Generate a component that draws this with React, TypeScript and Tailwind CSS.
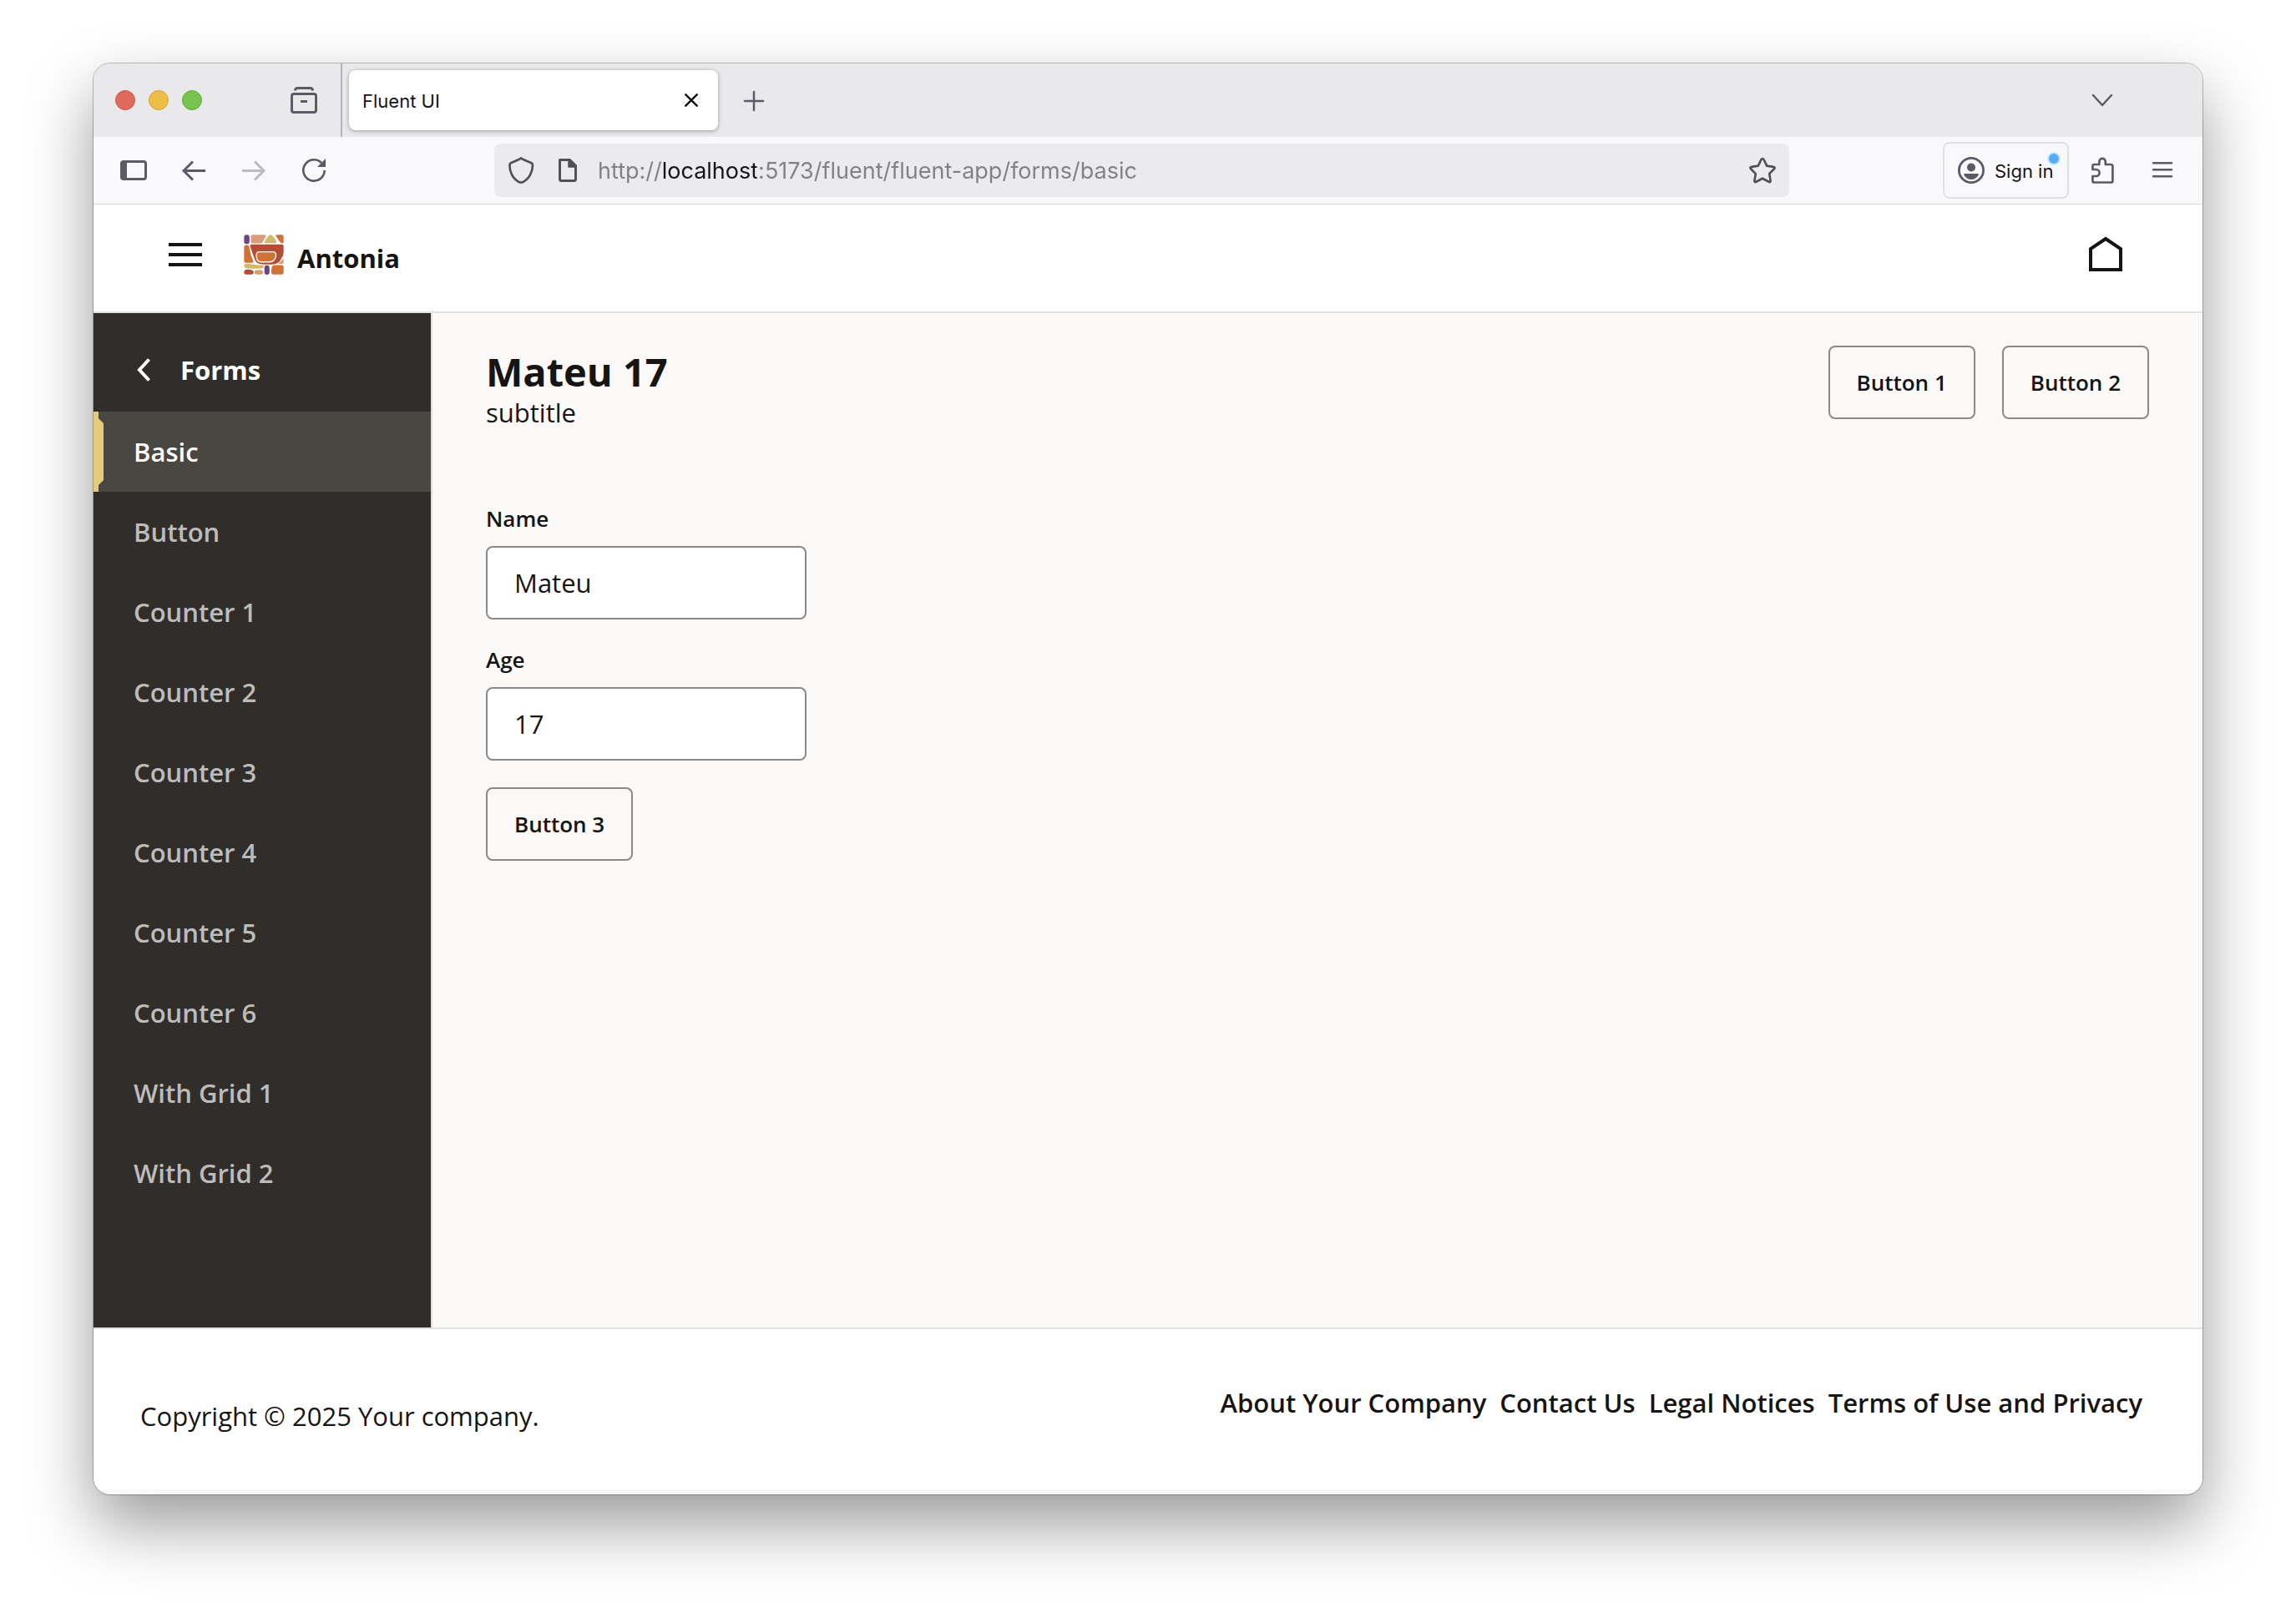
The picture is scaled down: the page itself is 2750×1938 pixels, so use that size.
import type { ReactNode } from "react";

const menuItems = [
  "Basic",
  "Button",
  "Counter 1",
  "Counter 2",
  "Counter 3",
  "Counter 4",
  "Counter 5",
  "Counter 6",
  "With Grid 1",
  "With Grid 2",
];

const footerLinks = ["About Your Company", "Contact Us", "Legal Notices", "Terms of Use and Privacy"];

function IconButton({ label, className = "", children }: { label: string; className?: string; children: ReactNode }) {
  return (
    <button type="button" aria-label={label} className={`flex size-8 shrink-0 items-center justify-center ${className}`}>
      {children}
    </button>
  );
}

function OutlinedButton({ children }: { children: ReactNode }) {
  return (
    <button
      type="button"
      className="h-[88px] rounded-lg border-2 border-[#8b8a88] px-8 text-[26px] leading-8 font-semibold whitespace-nowrap"
    >
      {children}
    </button>
  );
}

function Field({ id, label, value }: { id: string; label: string; value: string }) {
  return (
    <div className="flex flex-col">
      <label htmlFor={id} className="text-[26px] leading-[33px] font-semibold">
        {label}
      </label>
      <input
        id={id}
        defaultValue={value}
        className="mt-4 h-[88px] w-96 rounded-lg border-2 border-[#8b8a88] bg-white px-8 text-[31px]"
      />
    </div>
  );
}

function Logo() {
  return (
    <svg viewBox="68 48 142 142" className="size-12 shrink-0" aria-hidden="true">
      <rect x="69" y="49" width="19" height="32" rx="8" fill="#6b4581" />
      <path d="M99 49h41q9 0 5 7l-10 18q-3 5-8 5H99q-6 0-6-6V55q0-6 6-6z" fill="#dc9a76" />
      <path d="M157 51q6-4 12 0 10 10 15 23 1 4-4 4h-36q-5 0-3-4 6-13 16-23z" fill="#d2b96c" />
      <path d="M184 49h19q6 0 6 6v19q0 5-5 5-5 0-8-5l-14-20q-2-5 2-5z" fill="#cf7335" />
      <path d="M75 85h6q5 0 6 5l6 30 9 23q1 5-4 5H75q-6 0-6-6V93q0-8 6-8z" fill="#cf7335" />
      <path
        d="M95 83h108q6 0 6 6v21q0 14-8 22-6 16-22 20-26 3-52 0-14-2-19-14-9-21-17-48-2-7 4-7z"
        fill="#b34d35"
      />
      <path
        d="M122 109h50q10 0 10 12 0 11-8 19-5 5-14 5h-30q-13 0-16-12-2-10-1-16 2-8 9-8z"
        fill="#cf7335"
        stroke="#fff"
        strokeWidth="4"
      />
      <path d="M205 135q4-2 4 3v10q0 4-5 4h-11q-4-1-1-4 9-5 13-13z" fill="#dc9a76" />
      <path d="M74 151q14 0 28 3 17 3 33 2 5 1 4 6-1 6-7 6-30 2-57-1-6-1-6-8t5-8z" fill="#d2b96c" />
      <path d="M75 172q10-2 20 1 8 2 8 9 0 7-7 7H76q-7 0-7-8t6-9z" fill="#b34d35" />
      <path d="M112 174q10-2 19 0 5 1 5 7 0 8-7 8h-15q-8 0-8-8 0-6 6-7z" fill="#dc9a76" />
      <rect x="141" y="157" width="18" height="33" rx="9" fill="#6b4581" />
      <path d="M175 156h27q7 0 7 7v19q0 7-7 7h-30q-7 0-7-7 0-7 2-17 2-9 8-9z" fill="#cf7335" />
    </svg>
  );
}

function TabStrip() {
  return (
    <div className="flex h-[88px] items-center bg-[#e9e9eb]">
      <div className="ml-[26px] flex gap-4">
        <button type="button" aria-label="Close window" className="size-6 rounded-full border border-[#cf5648] bg-[#de695c]" />
        <button type="button" aria-label="Minimise window" className="size-6 rounded-full border border-[#d7a335] bg-[#edbd45]" />
        <button type="button" aria-label="Zoom window" className="size-6 rounded-full border border-[#62ae3a] bg-[#78c34e]" />
      </div>
      <IconButton label="Recent browsing" className="ml-[106px]">
        <svg viewBox="0 0 32 32" className="size-8" fill="none" stroke="#5b5b66" strokeWidth="3">
          <path d="M5.500 4.500q0-3 3-3h15q3 0 3 3" />
          <rect x="1.500" y="8.500" width="29" height="22" rx="2.500" />
          <path d="M12 17.500h8" />
        </svg>
      </IconButton>
      <div className="ml-7 h-full w-0.5 bg-[#b4b4b8]" />
      <div className="ml-2 flex h-[72px] w-[442px] items-center justify-between rounded-lg bg-white pr-6 pl-4 shadow-[0_1px_5px_rgba(0,0,0,0.35)]">
        <span className="pt-0.5 text-[22px] leading-8 text-[#15141a]">Fluent UI</span>
        <button type="button" aria-label="Close tab">
          <svg viewBox="0 0 16 16" className="size-4" fill="none" stroke="#15141a" strokeWidth="2.500" strokeLinecap="round">
            <path d="M1.300 1.300l13.400 13.400M14.700 1.300L1.300 14.700" />
          </svg>
        </button>
      </div>
      <IconButton label="New tab" className="ml-[27px]">
        <svg viewBox="0 0 32 32" className="size-8" fill="none" stroke="#5b5b66" strokeWidth="2.500" strokeLinecap="round">
          <path d="M16 6v22M5 17h22" />
        </svg>
      </IconButton>
      <IconButton label="List all tabs" className="mr-[104px] ml-auto">
        <svg viewBox="0 0 32 32" className="size-8" fill="none" stroke="#5b5b66" strokeWidth="2.500" strokeLinecap="round" strokeLinejoin="round">
          <path d="M5 10l11 12 11-12" />
        </svg>
      </IconButton>
    </div>
  );
}

function NavigationBar() {
  return (
    <div className="flex h-[81px] items-center border-b border-[#d8d8dc] bg-[#f9f9fb]">
      <div className="ml-8 flex gap-10">
        <IconButton label="Show sidebar">
          <svg viewBox="0 0 32 32" className="size-8" fill="none" stroke="#5b5b66" strokeWidth="3">
            <rect x="1.500" y="5.500" width="29" height="21" rx="2.500" />
            <path d="M2 6h6v20H2z" fill="#5b5b66" stroke="none" />
          </svg>
        </IconButton>
        <IconButton label="Back">
          <svg viewBox="0 0 32 32" className="size-8" fill="none" stroke="#5b5b66" strokeWidth="3">
            <path d="M30 16.500H4M15 5.500l-11 11 11 11" />
          </svg>
        </IconButton>
        <IconButton label="Forward">
          <svg viewBox="0 0 32 32" className="size-8" fill="none" stroke="#bababf" strokeWidth="3">
            <path d="M2 16.500h26M17 5.500l11 11-11 11" />
          </svg>
        </IconButton>
        <IconButton label="Reload">
          <svg viewBox="0 0 32 32" className="size-8" fill="none" stroke="#5b5b66" strokeWidth="2.700">
            <path d="M28.700 16a12.700 12.700 0 1 1-3.700-9" />
            <path d="M30 2v10H20z" fill="#5b5b66" stroke="none" />
          </svg>
        </IconButton>
      </div>
      <div className="ml-50 flex h-16 min-w-0 flex-1 items-center rounded-lg bg-[#ebebed] px-4">
        <IconButton label="Tracking protection">
          <svg viewBox="0 0 32 32" className="size-8" fill="none" stroke="#515155" strokeWidth="2.700" strokeLinejoin="round">
            <path d="M16 1.500l2 1.200 10.500 4.500q1.500.8 1.500 2.500c0 8-4 16.500-11.500 20.300q-2.500 1-5 0C6 26.200 2.400 17.700 2.400 9.700q0-1.700 1.500-2.500L14 2.700z" />
          </svg>
        </IconButton>
        <IconButton label="Site information" className="ml-6">
          <svg viewBox="0 0 32 32" className="size-8" fill="none" stroke="#515155" strokeWidth="3" strokeLinejoin="round">
            <path d="M6.500 3.500h12l7 7v16q0 2-2 2h-15q-2 0-2-2z" />
            <path d="M17 3v9h9z" fill="#515155" strokeWidth="1.500" />
          </svg>
        </IconButton>
        <input
          type="text"
          aria-label="Address"
          defaultValue="http://localhost:5173/fluent/fluent-app/forms/basic"
          className="ml-5 min-w-0 flex-1 bg-[linear-gradient(90deg,#808085_76px,#15141a_76px,#15141a_190px,#808085_190px)] bg-clip-text pt-0.5 text-[27px] leading-9 text-transparent"
        />
        <IconButton label="Bookmark this page">
          <svg viewBox="0 0 32 32" className="size-8" fill="none" stroke="#515155" strokeWidth="2.700" strokeLinejoin="round">
            <path d="M14.500 3q1.500-2 3 0l3.700 7.600 8 1.200q2.300.5.800 2.400l-5.800 5.900 1.400 8.300q.2 2.300-2 1.400L16 25.700l-7.600 4.100q-2.200.9-2-1.400l1.400-8.300L2 14.200q-1.500-1.900.8-2.400l8-1.200z" />
          </svg>
        </IconButton>
      </div>
      <button
        type="button"
        className="relative ml-[184px] flex h-[68px] w-[151px] items-center gap-3 rounded-lg border-2 border-[#e0e0e3] px-4 text-[22px] whitespace-nowrap text-[#15141a]"
      >
        <svg viewBox="0 0 32 32" className="size-8 shrink-0" fill="#5b5b66" aria-hidden="true">
          <circle cx="16" cy="16" r="14.600" fill="none" stroke="#5b5b66" strokeWidth="2.800" />
          <circle cx="16" cy="12.500" r="5" />
          <path d="M8.500 20h15q2 0 1 2-3 5-8.500 5t-8.500-5q-1-2 1-2z" />
        </svg>
        <span className="pt-0.5">Sign in</span>
        <span className="absolute top-3 right-2.5 size-3 rounded-full bg-[#5aabf5] ring-2 ring-[#c5e9fb]" />
      </button>
      <IconButton label="Extensions" className="ml-6">
        <svg viewBox="0 0 32 32" className="size-8" fill="none" stroke="#5b5b66" strokeWidth="2.700" strokeLinejoin="round">
          <path d="M4.400 15V11q0-2 2-2h6V5.500a3.700 3.700 0 0 1 7.400 0V9h6q2.600 0 2.600 2v17.500q0 2-2 2H6.400q-2 0-2-2V23h4.200a3.800 3.800 0 0 0 0-8z" />
        </svg>
      </IconButton>
      <IconButton label="Application menu" className="mr-8 ml-10">
        <svg viewBox="0 0 32 32" className="size-8" stroke="#5b5b66" strokeWidth="2.500" strokeLinecap="round">
          <path d="M5 7.300h22M5 15.300h22M5 23.300h22" />
        </svg>
      </IconButton>
    </div>
  );
}

function AppHeader() {
  return (
    <header className="flex h-[130px] items-center border-b-2 border-[#e2e2e1] bg-white px-[90px]">
      <button type="button" aria-label="Toggle navigation" className="flex w-10 flex-col gap-2 pb-2">
        <span className="h-1 bg-[#161513]" />
        <span className="h-1 bg-[#161513]" />
        <span className="h-1 bg-[#161513]" />
      </button>
      <div className="ml-[50px] flex items-center gap-4">
        <div className="pb-2">
          <Logo />
        </div>
        <span className="text-[31px] leading-10 font-bold">Antonia</span>
      </div>
      <button type="button" aria-label="Home" className="mr-0.5 ml-auto pb-2">
        <svg viewBox="0 0 48 48" className="size-12" fill="none" stroke="#161513" strokeWidth="4">
          <path d="M6 42V17L24 5l18 12v25z" />
        </svg>
      </button>
    </header>
  );
}

function SideNavigation() {
  return (
    <nav aria-label="Forms" className="w-[406px] shrink-0 border-r-2 border-[#e0dfdd] bg-[#312d2a] pt-5 text-[31px] leading-10">
      <button type="button" className="mb-0.5 flex h-24 w-full items-center gap-9 pl-[52px] font-bold text-white">
        <svg viewBox="0 0 16 28" className="h-7 w-4" fill="none" stroke="#fff" strokeWidth="4" aria-hidden="true">
          <path d="M14.500 1.500L3 14l11.500 12.500" />
        </svg>
        Forms
      </button>
      <ul>
        {menuItems.map((item, index) => (
          <li key={item}>
            <a
              href="#"
              aria-current={index === 0 ? "page" : undefined}
              className={
                index === 0
                  ? "relative flex h-24 items-center bg-[#494742] pl-12 font-semibold text-white"
                  : "flex h-24 items-center pl-12 font-semibold text-[#bdbcba]"
              }
            >
              {index === 0 && (
                <svg viewBox="0 0 12 96" className="absolute top-0 left-0 h-24 w-3" fill="#e5cb79" aria-hidden="true">
                  <path d="M0 0h6v8l6 6v68l-6 6v8H0z" />
                </svg>
              )}
              {item}
            </a>
          </li>
        ))}
      </ul>
    </nav>
  );
}

export default function App() {
  return (
    <div className="flex min-h-screen bg-white px-28 pt-[76px] pb-[148px] font-['Inter',sans-serif]">
      <div className="flex min-w-0 flex-1 flex-col overflow-hidden rounded-[20px] bg-[#fbf9f8] shadow-[0_0_0_1px_rgba(0,0,0,0.25),0_36px_80px_rgba(0,0,0,0.4)]">
        <TabStrip />
        <NavigationBar />
        <div className="flex flex-1 flex-col font-['Open_Sans',sans-serif] text-[#161513]">
          <AppHeader />
          <div className="flex flex-1">
            <SideNavigation />
            <main className="flex-1 bg-[#fbf9f8] px-16 pt-[39px]">
              <div className="flex items-start justify-between">
                <div>
                  <h1 className="text-[47px] leading-[62px] font-bold">Mateu 17</h1>
                  <p className="text-[31px] leading-9">subtitle</p>
                </div>
                <div className="flex gap-8">
                  <OutlinedButton>Button 1</OutlinedButton>
                  <OutlinedButton>Button 2</OutlinedButton>
                </div>
              </div>
              <form className="mt-[93px] flex flex-col items-start gap-8">
                <Field id="name" label="Name" value="Mateu" />
                <Field id="age" label="Age" value="17" />
                <OutlinedButton>Button 3</OutlinedButton>
              </form>
            </main>
          </div>
          <footer className="flex h-[194px] items-center justify-between border-t-2 border-[#e2e2e1] bg-white pr-[72px] pl-14 text-[31px] leading-10">
            <p className="pt-4">Copyright © 2025 Your company.</p>
            <ul className="flex gap-4 pb-4 font-semibold">
              {footerLinks.map((link) => (
                <li key={link}>
                  <a href="#">{link}</a>
                </li>
              ))}
            </ul>
          </footer>
          <div className="h-1.5" />
        </div>
      </div>
    </div>
  );
}
